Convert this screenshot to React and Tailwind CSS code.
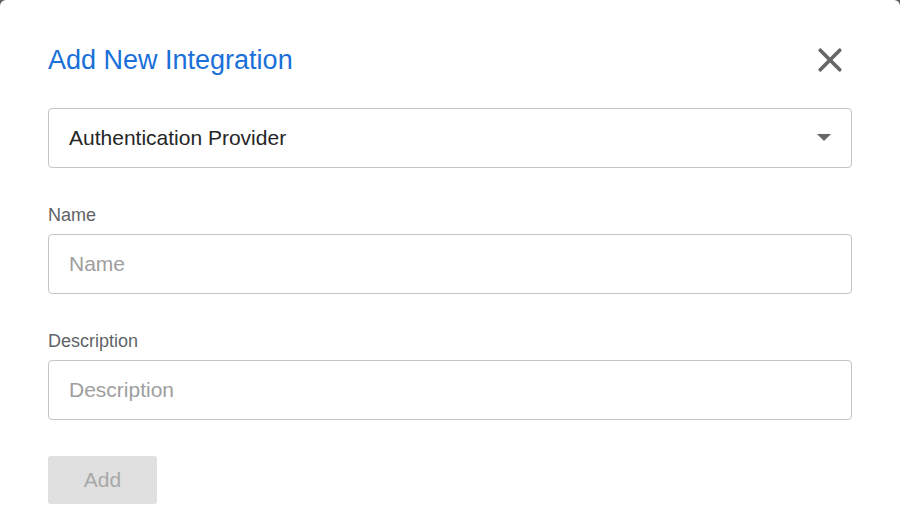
import React from 'react';

function Field({ label, placeholder }) {
  return (
    <div className="flex flex-col">
      <label className="text-[18px] leading-[20px] text-[#5f6368] mb-[9px]">{label}</label>
      <input
        placeholder={placeholder}
        className="h-[60px] w-full rounded-[4px] border border-[#c4c4c4] px-[20px] text-[21px] text-[#333] placeholder:text-[#9e9e9e] outline-none"
      />
    </div>
  );
}

export default function App() {
  return (
    <div className="w-[900px] h-[526px] bg-[#5f5f5f] overflow-hidden font-['Liberation_Sans',Arial,sans-serif]">
      <div className="h-[540px] bg-white rounded-[6px] px-[48px] pt-[40px]">
        <div className="flex items-center justify-between h-[40px]">
          <h1 className="text-[27px] text-[#1a6fd9]">Add New Integration</h1>
          <button className="mr-[9px] text-[#666]">
            <svg width="26" height="26" viewBox="0 0 24 24" fill="none" stroke="currentColor" strokeWidth="3.4" strokeLinecap="round">
              <path d="M3 3L21 21M21 3L3 21" />
            </svg>
          </button>
        </div>

        <div className="mt-[28px] h-[60px] rounded-[4px] border border-[#c4c4c4] flex items-center justify-between pl-[20px] pr-[20px]">
          <span className="text-[21px] text-[#262626]">Authentication Provider</span>
          <svg width="14" height="8" viewBox="0 0 14 8">
            <path d="M0 0H14L7 7Z" fill="#666" />
          </svg>
        </div>

        <div className="mt-[37px] flex flex-col gap-[37px]">
          <Field label="Name" placeholder="Name" />
          <Field label="Description" placeholder="Description" />
        </div>

        <button className="mt-[36px] w-[109px] h-[48px] rounded-[3px] bg-[#e0e0e0] text-[21px] text-[#a8a8a8]">Add</button>
      </div>
    </div>
  );
}
